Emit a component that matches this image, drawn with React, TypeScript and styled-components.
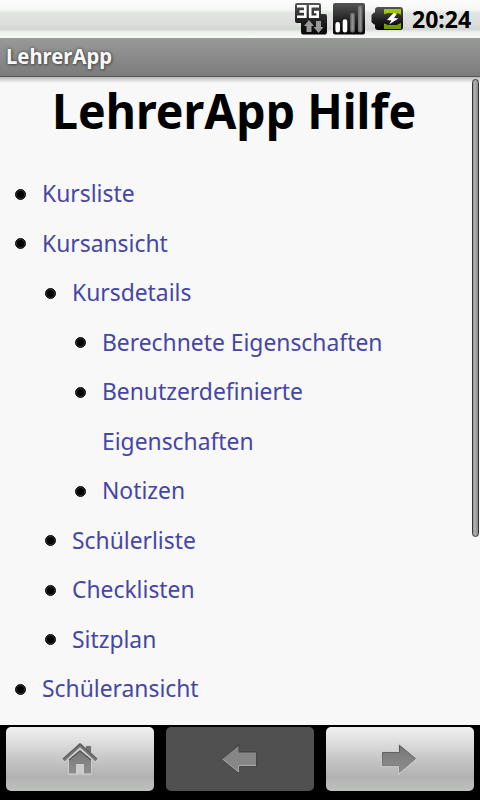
import React from "react";
import styled, { createGlobalStyle } from "styled-components";

const Global = createGlobalStyle`
  * { box-sizing: border-box; }
  body { margin: 0; background: #f8f8f8; font-family: "Noto Sans", "Open Sans", sans-serif; }
`;

const Screen = styled.div`
  display: flex;
  flex-direction: column;
  width: 480px;
  height: 800px;
  overflow: hidden;
  background: #f8f8f8;
`;

const StatusBar = styled.header`
  display: flex;
  flex: none;
  align-items: flex-start;
  justify-content: flex-end;
  gap: 6px;
  height: 38px;
  padding-right: 9px;
  background: linear-gradient(#fdfdfd 0, #f4f6f4 10px, #e3e5e3 13px, #dadcda 26px, #d2d4d2 29px, #eceeec 32px, #f9faf9 38px);
`;

const StatusIcon = styled.svg`
  display: block;
  flex: none;
  width: 32px;
  height: 38px;
`;

const Clock = styled.time`
  width: 59px;
  margin-left: 3px;
  font-size: 23px;
  line-height: 38px;
  font-weight: 700;
  white-space: nowrap;
  color: #000;
`;

const TitleBar = styled.div`
  flex: none;
  height: 39px;
  padding-left: 6px;
  background: linear-gradient(#989a98, #7b7b7b);
  border-bottom: 1px solid #555;
  color: #f8f8f8;
`;

const Title = styled.span`
  display: inline-block;
  font-size: 21px;
  line-height: 36px;
  font-weight: 700;
  text-shadow: 0 0 3px #444, 1px 1px 3px #555;
  transform: scaleX(0.965);
  transform-origin: 0 0;
`;

const Content = styled.main`
  display: flex;
  flex: none;
  height: 648px;
  overflow: hidden;
  background: linear-gradient(#b8b8b8, #f8f8f8 6px);
`;

const Page = styled.div`
  flex: 1;
  min-width: 0;
`;

const Heading = styled.h1`
  margin: 0 0 0 52px;
  height: 91px;
  font-size: 49px;
  line-height: 66px;
  font-weight: 700;
  white-space: nowrap;
  transform: scaleX(0.948);
  transform-origin: 0 0;
`;

const List = styled.ul`
  margin: 0;
  padding: 0;
  list-style: none;
`;

const Item = styled.li<{ $level: number }>`
  display: flex;
  align-items: flex-start;
  padding-left: ${(p) => 15 + p.$level * 30}px;
  font-size: 24px;
  line-height: 49.5px;
`;

const Bullet = styled.span`
  flex: none;
  width: 11px;
  height: 11px;
  margin: 20.5px 16px 0 0;
  border-radius: 50%;
  background: #000;
  border: 1px solid #111;
  box-shadow: inset 0 0 0 1px #333;
`;

const Link = styled.a`
  color: #4646a5;
  white-space: pre;
  transform: scaleX(0.952);
  transform-origin: 0 0;
`;

const Track = styled.div`
  flex: none;
  width: 8px;
  padding-top: 2px;
`;

const Thumb = styled.div`
  width: 7px;
  height: 458px;
  border: 1px solid #333;
  border-radius: 4px;
  background: linear-gradient(90deg, #999, #b0b0b0 40%, #888);
`;

const Toolbar = styled.nav`
  display: grid;
  grid-template-columns: repeat(3, 148px);
  gap: 12px;
  height: 75px;
  padding: 2px 6px 9px;
  background: #000;
`;

const NavButton = styled.button<{ $disabled?: boolean }>`
  display: flex;
  align-items: center;
  justify-content: center;
  height: 64px;
  padding: 0 0 2px;
  border: 0;
  border-radius: 5px;
  background: ${(p) => (p.$disabled ? "#505050" : "linear-gradient(#eff0ef 0, #dcdddc 16px, #c5c6c5 32px, #b1b2b1 50px, #bec0be 64px)")};
`;

const NavIcon = styled.svg`
  display: block;
  width: 40px;
  height: 40px;
`;

const items: [number, string][] = [
  [0, "Kursliste"],
  [0, "Kursansicht"],
  [1, "Kursdetails"],
  [2, "Berechnete Eigenschaften"],
  [2, "Benutzerdefinierte\nEigenschaften"],
  [2, "Notizen"],
  [1, "Schülerliste"],
  [1, "Checklisten"],
  [1, "Sitzplan"],
  [0, "Schüleransicht"],
];

const NetworkIcon = () => (
  <StatusIcon viewBox="0 0 32 38">
    <defs>
      <linearGradient id="dark" x1="0" y1="0" x2="0" y2="1">
        <stop offset="0" stopColor="#555" />
        <stop offset="0.6" stopColor="#1c1c1c" />
        <stop offset="1" stopColor="#050505" />
      </linearGradient>
    </defs>
    <path d="M2 3H24Q26 3 26 5V14H30Q32 14 32 16V32Q32 34.500 30 34.500H8Q6 34.500 6 32V23H2Q0 23 0 21V5Q0 3 2 3Z" fill="url(#dark)" />
    <path d="M2 6.300H10.300V16.700H2M4.500 11.500H10.300M24 6.300H15.200V16.700H22.700V12H19" fill="none" stroke="#fff" strokeWidth="2.600" />
    <path d="M14 20L19 26H16.500V32H11.500V26H9Z" fill="#999" />
    <path d="M23.500 33L18.500 27H21V21H26V27H28.500Z" fill="#999" />
  </StatusIcon>
);

const SignalIcon = () => (
  <StatusIcon viewBox="0 0 32 38">
    <rect y="3" width="32" height="31.500" rx="2" fill="url(#dark)" />
    <g strokeWidth="4.600" strokeLinecap="round">
      <path d="M4.700 24.300V30.200M12 21.500V30.200" stroke="#fff" />
      <path d="M19.500 15V30.200M27.200 7.500V30.200" stroke="#777" />
    </g>
    <path d="M19.500 15V30M27.200 7.500V30" stroke="#929292" strokeWidth="1.500" />
  </StatusIcon>
);

const BatteryIcon = () => (
  <StatusIcon viewBox="0 0 32 38">
    <path d="M7 7H29Q32 7 32 10V27Q32 30 29 30H7Q4 30 4 27V24.500H3L.5 22V15L3 12.500H4V10Q4 7 7 7Z" fill="url(#dark)" />
    <path d="M13 9H30V13H13Z" fill="#9dca00" />
    <path d="M13 25H30V29H13Z" fill="#719b00" />
    <path d="M13 13V14.500L17 13ZM30 13V15L26 13ZM13 25V23.500L17 25ZM30 25V23L26 25Z" fill="#88b300" />
    <path d="M22.500 13L16 20L20.500 20.500L18 24.500L27.500 18.500L23 18L26 13.500Z" fill="#fff" />
  </StatusIcon>
);

const IconDefs = () => (
  <defs>
    <linearGradient id="gray" x1="0" y1="0" x2="0" y2="1">
      <stop offset="0" stopColor="#777" />
      <stop offset="1" stopColor="#8e8e8e" />
    </linearGradient>
    <linearGradient id="rim" x1="0" y1="0" x2="0" y2="1">
      <stop offset="0" stopColor="#505050" />
      <stop offset="1" stopColor="#8c8c8c" />
    </linearGradient>
  </defs>
);

const HomeIcon = () => (
  <NavIcon viewBox="0 0 40 40">
    <IconDefs />
    <g stroke="#d0d1d0" strokeWidth="1.500" fill="#d0d1d0">
      <path d="M3 22L20 6L26 11.500V8H31V16L37 22L36 23L31 19V36H22V27H18V36H9V19L4 23Z" />
    </g>
    <path d="M26 8H31V16L26 11.500Z" fill="#747474" />
    <path d="M9 21.500L20 12L31 21.500V35.500H24V26H16V35.500H9Z" fill="url(#gray)" />
    <path d="M16 26H24V35.500H16Z" fill="#cbcccb" />
    <path d="M9 22L20 13L31 22" fill="none" stroke="#555" strokeWidth="1.200" />
    <path d="M3.500 22L20 7L36.500 22" fill="none" stroke="#737373" strokeWidth="3.200" />
    <path d="M3 20.800L20 6L37 20.800" fill="none" stroke="#555" strokeWidth="1" />
  </NavIcon>
);

const BackIcon = () => (
  <NavIcon viewBox="0 0 40 40">
    <path d="M1.500 21L19 6V13.500H37V28.500H19V35.500Z" fill="#454845" stroke="#454845" strokeWidth="1" />
    <path d="M2.500 21L18.500 8V14.500H36V27.500H18.500V34Z" fill="#868686" />
    <path d="M2.500 21L18.500 34V27.500H36" fill="none" stroke="#aaa" />
  </NavIcon>
);

const ForwardIcon = () => (
  <NavIcon viewBox="0 0 40 40">
    <path d="M2.500 14.500H19.500V7.500L35.500 20.500L19.500 34.500V27.500H2.500Z" fill="url(#gray)" stroke="#cbcccb" strokeWidth="2.500" />
    <path d="M2.500 14.500H19.500V7.500L35.500 20.500L19.500 34.500V27.500H2.500Z" fill="url(#gray)" stroke="url(#rim)" strokeWidth="1" />
  </NavIcon>
);

export default function App() {
  return (
    <Screen>
      <Global />
      <StatusBar>
        <NetworkIcon />
        <SignalIcon />
        <BatteryIcon />
        <Clock>20:24</Clock>
      </StatusBar>
      <TitleBar>
        <Title>LehrerApp</Title>
      </TitleBar>
      <Content>
        <Page>
          <Heading>LehrerApp Hilfe</Heading>
          <List>
            {items.map(([level, text]) => (
              <Item key={text} $level={level}>
                <Bullet />
                <Link>{text}</Link>
              </Item>
            ))}
          </List>
        </Page>
        <Track>
          <Thumb />
        </Track>
      </Content>
      <Toolbar>
        <NavButton aria-label="Home">
          <HomeIcon />
        </NavButton>
        <NavButton $disabled aria-label="Zurück">
          <BackIcon />
        </NavButton>
        <NavButton aria-label="Vor">
          <ForwardIcon />
        </NavButton>
      </Toolbar>
    </Screen>
  );
}
